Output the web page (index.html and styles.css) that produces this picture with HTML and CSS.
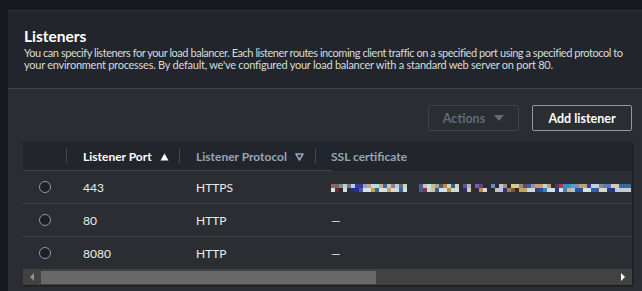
FILE: index.html
```html
<!DOCTYPE html>
<html>
<head>
<meta charset="utf-8">
<link rel="stylesheet" href="styles.css">
</head>
<body>
<div class="panel">
  <div class="panel-header">
    <h2 class="title">Listeners</h2>
    <p class="desc"><span class="line l1">You can specify listeners for your load balancer. Each listener routes incoming client traffic on a specified port using a specified protocol to</span> <span class="line l2">your environment processes. By default, we've configured your load balancer with a standard web server on port 80.</span></p>
  </div>
  <div class="panel-body">
    <div class="actions">
      <button class="btn btn-disabled">Actions <span class="caret"></span></button>
      <button class="btn btn-normal">Add listener</button>
    </div>
    <div class="table">
      <div class="row head">
        <div class="cell c-sel"></div>
        <div class="cell c-port"><span class="sep"></span><span class="th active">Listener Port</span><svg class="sort" width="9" height="8" viewBox="0 0 9 8"><path d="M4.5 0.5 L8.5 7.5 L0.5 7.5 Z" fill="#ffffff"/></svg></div>
        <div class="cell c-proto"><span class="sep"></span><span class="th">Listener Protocol</span><svg class="sort" width="9" height="8" viewBox="0 0 9 8"><path d="M1 1 L8 1 L4.5 7 Z" fill="none" stroke="#95a5b7" stroke-width="1.5" stroke-linejoin="round"/></svg></div>
        <div class="cell c-ssl"><span class="sep"></span><span class="th">SSL certificate</span></div>
      </div>
      <div class="row">
        <div class="cell c-sel"><span class="radio"></span></div>
        <div class="cell c-port">443</div>
        <div class="cell c-proto">HTTPS</div>
        <div class="cell c-ssl"><span class="blur"></span></div>
      </div>
      <div class="row">
        <div class="cell c-sel"><span class="radio"></span></div>
        <div class="cell c-port">80</div>
        <div class="cell c-proto">HTTP</div>
        <div class="cell c-ssl">—</div>
      </div>
      <div class="row last">
        <div class="cell c-sel"><span class="radio"></span></div>
        <div class="cell c-port">8080</div>
        <div class="cell c-proto">HTTP</div>
        <div class="cell c-ssl">—</div>
      </div>
      <div class="scrollbar">
        <span class="arrow left"></span>
        <span class="thumb"></span>
        <span class="track"></span>
        <span class="arrow right"></span>
      </div>
    </div>
  </div>
</div>
</body>
</html>
```

FILE: styles.css
```css
* { box-sizing: border-box; }
html, body { margin: 0; padding: 0; }
body {
  background: #16191f;
  font-family: Lato, "Noto Sans", sans-serif;
  width: 642px;
  height: 291px;
  overflow: hidden;
}
.panel {
  margin: 10px 0 0 8px;
  background: #2a2d32;
  height: 290px;
  border-top: 1px solid #2f3339;
}
.panel-header {
  background: #22262c;
  padding: 15px 10px 10px 16px;
  border-bottom: 1px solid #3f434a;
  height: 78px;
}
.title {
  margin: 0;
  font-size: 15.5px;
  line-height: 20px;
  font-weight: 700;
  color: #ffffff;
}
.desc {
  margin: 1px 0 0 0;
  font-size: 11px;
  line-height: 12px;
  color: #d5dbdb;
}
.line { display: block; white-space: nowrap; }
.l1 { letter-spacing: -0.45px; }
.l2 { letter-spacing: -0.25px; }
.panel-body {
  padding: 16px 10px 0 15px;
}
.actions {
  display: flex;
  justify-content: flex-end;
  gap: 13px;
  height: 26px;
}
.btn {
  font-family: inherit;
  font-size: 12.5px;
  font-weight: 700;
  background: transparent;
  border-radius: 2px;
  height: 26px;
  padding: 0;
  display: flex;
  align-items: center;
  justify-content: center;
}
.btn-disabled {
  width: 91px;
  border: 1px solid #3f444b;
  color: #5f6b7a;
  gap: 9px;
}
.caret {
  width: 0; height: 0;
  border-left: 5px solid transparent;
  border-right: 5px solid transparent;
  border-top: 6px solid #5f6b7a;
}
.btn-normal {
  width: 100px;
  border: 1px solid #8d99a8;
  color: #ffffff;
}
.table {
  margin-top: 11px;
  background: #2a2e33;
  box-shadow: 1px 1px 1px #1a1c20;
}
.row {
  display: flex;
  height: 33px;
  border-bottom: 1px solid #3b3f46;
  align-items: center;
  font-size: 12px;
  color: #eaeded;
}
.row.last { height: 32px; border-bottom: none; }
.row.head {
  background: #22252b;
  height: 29px;
  border-bottom: none;
  background-image: linear-gradient(#40444b, #40444b);
  background-size: 309px 1px;
  background-repeat: no-repeat;
  background-position: 0 100%;
  font-weight: 700;
  color: #95a5b7;
}
.cell {
  display: flex;
  align-items: center;
  position: relative;
  height: 100%;
  white-space: nowrap;
}
.c-sel { width: 43px; justify-content: center; }
.c-port { width: 113px; padding-left: 17px; }
.c-proto { width: 136px; padding-left: 17px; }
.c-ssl { flex: 1; padding-left: 16px; overflow: hidden; }
.sep {
  position: absolute;
  left: 0;
  top: 6px;
  height: 15px;
  width: 1px;
  background: #414750;
}
.th.active { color: #ffffff; }
.sort { margin-left: 8px; }
.c-proto .sort { margin-left: 8px; }
.radio {
  width: 12px; height: 12px;
  border-radius: 50%;
  border: 1px solid #8d99a8;
  background: #1a2029;
  margin-left: 1px;
}
.blur {
  display: block;
  width: 300px;
  height: 8px;
  margin-top: 1px;
  background:
    linear-gradient(90deg,
      #8a6a62 0 4px, #6c6a7a 4px 8px, #8c8c7a 8px 12px, #a9d6d6 12px 16px, #7b7686 16px 20px, #b4d0e0 20px 24px, #3b3aa0 24px 32px, #9aa0b0 32px 36px, #caa080 36px 40px, #bcd8e0 40px 48px, #c8b080 48px 52px, #3a6ab0 52px 56px, #c4c8c0 56px 60px, #9a8070 60px 64px, #b4d0e0 64px 68px, #6a6a80 68px 72px, #c8d8c0 72px 76px, transparent 76px 88px,
      #5a5a80 88px 92px, #b0c8d8 92px 96px, #d8d8c8 96px 100px, #c8b888 100px 104px, #a0a0a8 104px 108px, #58586a 108px 112px, #b89030 112px 116px, #c8d0d8 116px 120px, #3a6090 120px 124px, #d8d0c0 124px 128px, transparent 128px 132px, #5a5a90 132px 136px, #c0b0a8 136px 140px, transparent 140px 144px, #7a5ab0 144px 148px, #70407a 148px 152px, transparent 152px 160px, #6a90b0 160px 164px, transparent 164px 168px, #c0c8d8 168px 172px, #b09078 172px 176px, transparent 176px 180px, #d8c898 180px 188px, #9a8a78 188px 192px, #5a5060 192px 196px, #4060a0 196px 200px, #9090b0 200px 204px, #c8a070 204px 212px, #c8d8b8 212px 216px, #c0a080 216px 220px, transparent 220px 224px, #5a3a5a 224px 228px, #a04050 228px 232px, #3090d0 232px 240px, #50a0c0 240px 244px,
      #8090a0 244px 248px, #b8a080 248px 256px, #3a3aa0 256px 260px, #c0d0e0 260px 268px, #a08070 268px 272px, #5080c0 272px 280px, #d0c8b8 280px 288px, #3a6a90 288px 300px) 0 0 / 300px 4px no-repeat,
    linear-gradient(90deg,
      #d8e0e0 0 4px, #7a2030 4px 8px, transparent 8px 12px, #d0e0e8 12px 16px, transparent 16px 20px, #2a2a90 20px 28px, #3a60a0 28px 32px, #d8e0e8 32px 40px, #c0a050 40px 44px, #4060a0 44px 48px, #d8e0e0 48px 56px, #c8a060 56px 60px, #d0d8e0 60px 68px, #3a60a0 68px 72px, #d8e0e0 72px 76px, transparent 76px 88px,
      #3a60a0 88px 92px, #8a3040 92px 96px, #c8d8e0 96px 100px, #d0c0a0 100px 104px, #3a6090 104px 108px, #d8e0e0 108px 116px, #b09040 116px 120px, #d0d8e0 120px 128px, transparent 128px 132px, #2a2a80 132px 136px, #d8c8b0 136px 140px, transparent 140px 148px, #b89040 148px 152px, #d8d8e0 152px 156px, transparent 156px 164px, #c0c0d0 164px 172px, #2a3a80 172px 176px, #a08060 176px 180px, #8a5030 180px 184px, transparent 184px 188px, #c8a060 188px 196px, #d0d8e0 196px 204px, #3a3a80 204px 208px, #2a50a0 208px 212px, #3a80c0 212px 216px, #d0e0e8 216px 224px, #2a3a70 224px 228px, #d8e0e8 228px 232px, #4080c0 232px 236px, #d0b080 236px 240px, #a0c8e0 240px 244px,
      #2a50a0 244px 252px, #d8e0e0 252px 260px, #3060a0 260px 268px, #d8d8d0 268px 276px, #2a3a80 276px 284px, #c8c8d8 284px 300px) 0 4px / 300px 4px no-repeat;
}
.scrollbar {
  display: flex;
  height: 16px;
  background: #424242;
  align-items: center;
}
.arrow { width: 18px; height: 16px; display: flex; align-items: center; justify-content: center; }
.arrow.left::before {
  content: "";
  border-top: 4px solid transparent;
  border-bottom: 4px solid transparent;
  border-right: 4px solid #8f8f8f;
}
.arrow.right::before {
  content: "";
  border-top: 4px solid transparent;
  border-bottom: 4px solid transparent;
  border-left: 4px solid #ffffff;
}
.thumb { width: 335px; height: 13px; background: #686868; }
.track { flex: 1; }
```
